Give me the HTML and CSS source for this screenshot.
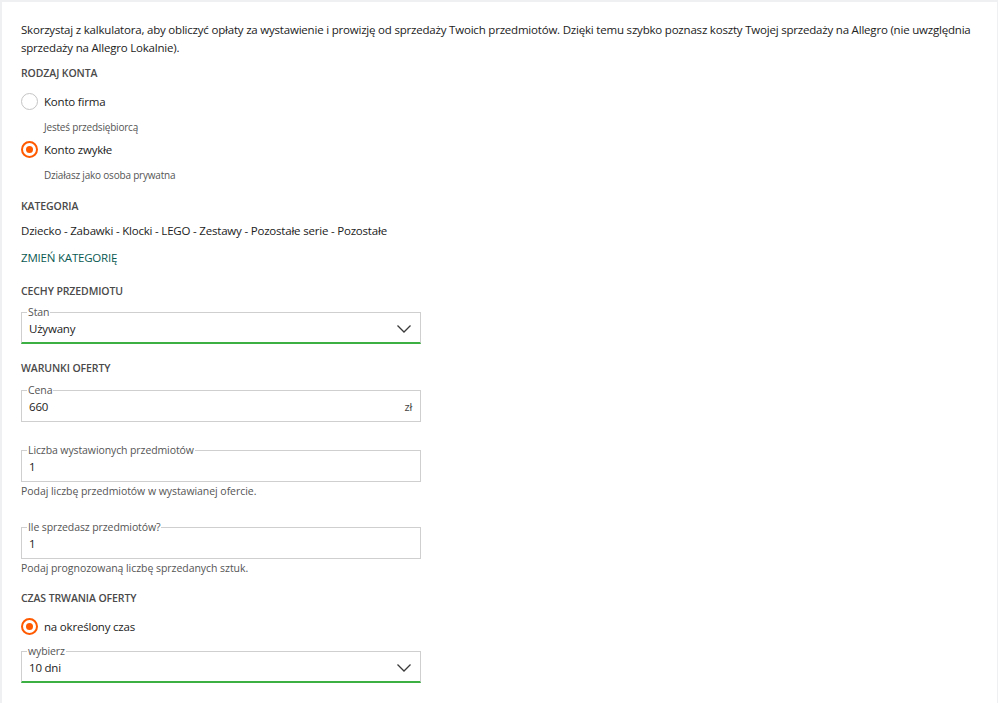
FILE: index.html
```html
<!DOCTYPE html>
<html lang="pl">
<head>
<meta charset="utf-8">
<link rel="stylesheet" href="styles.css">
</head>
<body>
<div class="card">
  <p class="intro">Skorzystaj z kalkulatora, aby obliczyć opłaty za wystawienie i prowizję od sprzedaży Twoich przedmiotów. Dzięki temu szybko poznasz koszty Twojej sprzedaży na Allegro (nie uwzględnia sprzedaży na Allegro Lokalnie).</p>

  <div class="section-title st-konto">RODZAJ KONTA</div>
  <label class="radio r-first"><span class="dot"></span><span>Konto firma</span></label>
  <div class="hint">Jesteś przedsiębiorcą</div>
  <label class="radio r-second"><span class="dot on"></span><span>Konto zwykłe</span></label>
  <div class="hint">Działasz jako osoba prywatna</div>

  <div class="section-title st-kat">KATEGORIA</div>
  <div class="cat">Dziecko - Zabawki - Klocki - LEGO - Zestawy - Pozostałe serie - Pozostałe</div>
  <a class="link">ZMIEŃ KATEGORIĘ</a>

  <div class="section-title st-cechy">CECHY PRZEDMIOTU</div>
  <fieldset class="field select f-stan">
    <legend>Stan</legend>
    <div class="value"><span>Używany</span><svg class="chev" width="14" height="8" viewBox="0 0 14 8"><polyline points="0.5,0.5 7,7 13.5,0.5" fill="none" stroke="#3a3a3a" stroke-width="1.3"/></svg></div>
  </fieldset>

  <div class="section-title st-war">WARUNKI OFERTY</div>
  <fieldset class="field f-cena">
    <legend>Cena</legend>
    <div class="value"><span>660</span><span class="unit">zł</span></div>
  </fieldset>

  <fieldset class="field f-liczba">
    <legend>Liczba wystawionych przedmiotów</legend>
    <div class="value"><span>1</span></div>
  </fieldset>
  <div class="help">Podaj liczbę przedmiotów w wystawianej ofercie.</div>

  <fieldset class="field f-ile">
    <legend>Ile sprzedasz przedmiotów?</legend>
    <div class="value"><span>1</span></div>
  </fieldset>
  <div class="help">Podaj prognozowaną liczbę sprzedanych sztuk.</div>

  <div class="section-title st-czas">CZAS TRWANIA OFERTY</div>
  <label class="radio r-czas"><span class="dot on"></span><span>na określony czas</span></label>
  <fieldset class="field select f-wyb">
    <legend>wybierz</legend>
    <div class="value"><span>10 dni</span><svg class="chev" width="14" height="8" viewBox="0 0 14 8"><polyline points="0.5,0.5 7,7 13.5,0.5" fill="none" stroke="#3a3a3a" stroke-width="1.3"/></svg></div>
  </fieldset>
</div>
</body>
</html>
```
FILE: styles.css
```css
html, body {
  margin: 0;
  padding: 0;
  background: #eef0f2;
}
body {
  font-family: "Open Sans", "Liberation Sans", sans-serif;
  color: #222;
  height: 703px;
  overflow: hidden;
}
.card {
  background: #fff;
  margin: 2px 1px 0 2px;
  padding: 19px 19px 40px 19px;
  min-height: 701px;
  box-sizing: border-box;
  display: flex;
  flex-direction: column;
  align-items: flex-start;
}
.intro {
  margin: 0;
  font-size: 11.5px;
  letter-spacing: -0.2px;
  line-height: 18px;
}
.section-title {
  font-size: 10.5px;
  letter-spacing: -0.1px;
  line-height: 16px;
  font-weight: 600;
  color: #4a4a4a;
}
.st-konto { margin-top: 8px; }
.st-kat { margin-top: 15px; }
.st-cechy { margin-top: 16px; }
.st-war { margin-top: 16px; }
.st-czas { margin-top: 14px; }

.radio {
  display: flex;
  align-items: center;
  gap: 6px;
  height: 24px;
  font-size: 11.5px;
  letter-spacing: -0.2px;
}
.r-first { margin-top: 8px; }
.r-second { margin-top: 2px; }
.r-czas { margin-top: 8px; }
.dot {
  width: 17px;
  height: 17px;
  box-sizing: border-box;
  border-radius: 50%;
  border: 1px solid #c4c4c4;
  display: flex;
  align-items: center;
  justify-content: center;
}
.dot.on {
  border: 2px solid #ff5a00;
}
.dot.on::after {
  content: "";
  width: 7px;
  height: 7px;
  border-radius: 50%;
  background: #ff5a00;
}
.hint {
  font-size: 10px;
  letter-spacing: -0.2px;
  line-height: 16px;
  color: #555;
  margin-top: 6px;
  margin-left: 23px;
}
.cat {
  font-size: 11.5px;
  letter-spacing: -0.2px;
  line-height: 18px;
  margin-top: 8px;
}
.link {
  font-size: 11.5px;
  letter-spacing: -0.2px;
  line-height: 18px;
  color: #0a5a52;
  margin-top: 9px;
}

.field {
  margin: 0;
  width: 400px;
  box-sizing: border-box;
  border: 1px solid #cfcfcf;
  padding: 0 8px 0 6px;
  min-width: 0;
}
.field legend {
  font-size: 10.5px;
  letter-spacing: -0.1px;
  line-height: 16px;
  color: #555;
  padding: 0 1px;
  margin-left: -1px;
}
.field .value {
  height: 29px;
  margin-top: -6px;
  display: flex;
  align-items: center;
  justify-content: space-between;
  font-size: 11.5px;
  letter-spacing: -0.2px;
  padding-left: 1px;
}
.field.select {
  border-bottom: 2px solid #3cb043;
}
.field.select .value {
  height: 27px;
  margin-top: -5px;
}
.unit {
  font-size: 11px;
  color: #444;
}
.chev {
  margin-right: 1px;
}
.f-stan { margin-top: 5px; }
.f-cena { margin-top: 6px; }
.f-liczba { margin-top: 20px; }
.f-ile { margin-top: 20px; }
.f-wyb { margin-top: 5px; }
.help {
  font-size: 10.5px;
  letter-spacing: -0.05px;
  line-height: 16px;
  color: #555;
  margin-top: 1px;
}
```
